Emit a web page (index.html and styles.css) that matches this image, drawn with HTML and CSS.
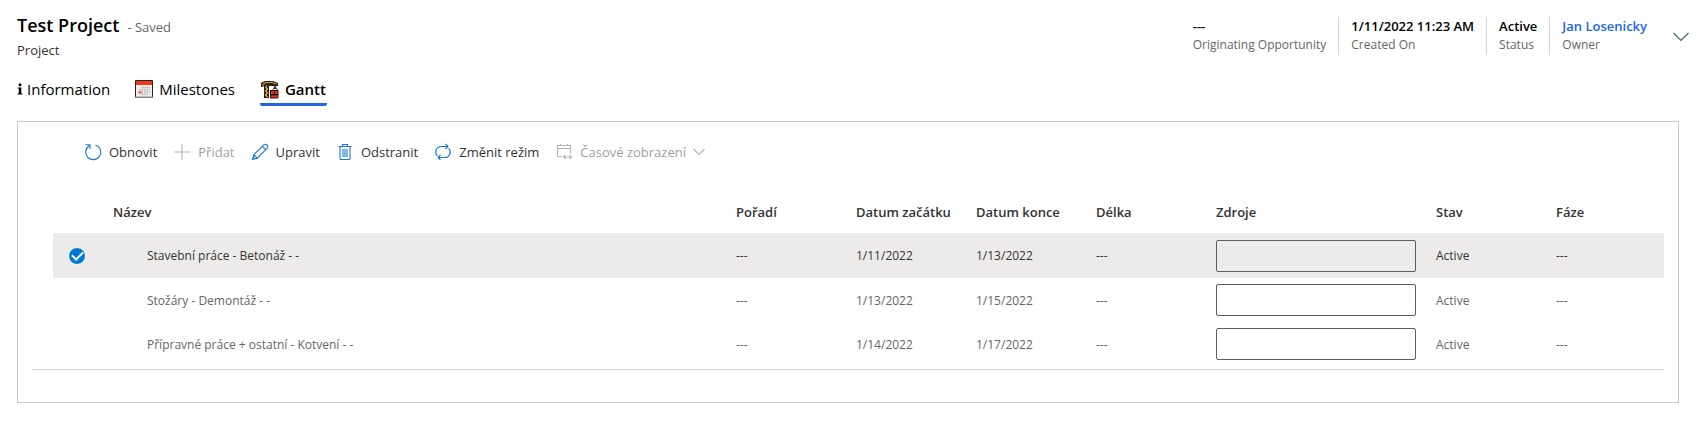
FILE: index.html
```html
<!DOCTYPE html>
<html lang="cs">
<head>
<meta charset="utf-8">
<meta name="viewport" content="width=device-width, initial-scale=1">
<title>Test Project</title>
<link rel="stylesheet" href="styles.css">
</head>
<body>
<header class="record-header">
  <div class="record-title">
    <div class="title-line"><h1>Test Project</h1><span class="saved">- Saved</span></div>
    <div class="entity">Project</div>
  </div>
  <dl class="summary">
    <div class="summary-item"><dt>Originating Opportunity</dt><dd>---</dd></div>
    <div class="summary-item"><dt>Created On</dt><dd>1/11/2022 11:23 AM</dd></div>
    <div class="summary-item"><dt>Status</dt><dd>Active</dd></div>
    <div class="summary-item"><dt>Owner</dt><dd><a href="#owner">Jan Losenicky</a></dd></div>
  </dl>
  <button class="expand" type="button" aria-label="Expand header">
    <svg width="16" height="10" viewBox="0 0 16 10"><path d="M.5 1 8 8.500 15.500 1" fill="none" stroke="#44646c" stroke-width="1.200"/></svg>
  </button>
</header>

<nav class="tabs">
  <a class="tab" href="#information">
    <svg width="6" height="12" viewBox="0 0 6 12"><circle cx="3" cy="1.700" r="1.500"/><path d="M.5 4.500H4.300V10.500H5.500V11.500H.5V10.500H1.800V5.500H.5Z"/></svg>
    Information</a>
  <a class="tab tab-milestones" href="#milestones">
    <svg width="18" height="18" viewBox="0 0 18 18"><path d="M.5.5h17v17H.5z" fill="#ededed" stroke="#222"/><path d="M1 1h16v4H1z" fill="#f03a17"/><path d="M0 16.500h18v1.500H0z" fill="#888"/><path d="M7 7.500h8M4 9.800h11M4 12.100h11M7 14.400h6" stroke="#a8a8a8" stroke-width="1.300" stroke-dasharray="1.500 1"/><path d="M3.500 11.500h3v2h-3z" fill="#f0573a"/></svg>
    Milestones</a>
  <a class="tab tab-gantt" href="#gantt" aria-current="page">
    <svg width="19" height="19" viewBox="0 0 19 19"><path d="M1 3 5 1h8l5 2v3h-2v3h-2V6H9v12H4V7H1z" fill="#27231d"/><path d="M2.500 4.500 6 2.500h6l4.500 1.500" fill="none" stroke="#d79d20" stroke-width="1.200"/><path d="M6.500 5v12M5 7l3 2-3 2 3 2-3 2 3 2" fill="none" stroke="#d7a62c" stroke-width="1"/><path d="M2 5h2v2H2z" fill="#777"/><path d="M12.500 10 15 6l2.500 4" fill="none" stroke="#555"/><path d="M10 10h8.500v8.500H10z" fill="#2b1715"/><path d="M11 11h3v3h-3zM15 11h2.500v3H15zM11 15.500h7v2h-7z" fill="#d8321f"/></svg>
    Gantt</a>
</nav>

<main class="panel">
  <div class="toolbar" role="toolbar">
    <button type="button">
      <svg width="18" height="18" viewBox="0 0 18 18"><path d="M5.200 2.800A7.500 7.500 0 1 0 11.500 2M1.500 1.700H6V6" /></svg>
      Obnovit</button>
    <button type="button" disabled>
      <svg width="18" height="18" viewBox="0 0 18 18"><path d="M9 1v16M1 9h16" /></svg>
      Přidat</button>
    <button type="button">
      <svg width="18" height="18" viewBox="0 0 18 18"><path d="M1.500 16.500 2.800 11.700 12.700 1.900Q14.300.6 16 2T16.100 5.300L6.300 15.200ZM11.300 3.300 14.700 6.700M2.800 11.700 6.300 15.200M2.200 14 4 15.800" /></svg>
      Upravit</button>
    <button type="button">
      <svg width="18" height="18" viewBox="0 0 18 18"><path d="M2.500 3.500h13M6.500 3.500v-2h5v2M4 3.500v12q0 1 1 1h8q1 0 1-1v-12M7 6v8M9 6v8M11 6v8" /></svg>
      Odstranit</button>
    <button type="button">
      <svg width="18" height="18" viewBox="0 0 18 18"><path d="M3.400 13Q.8 10 2.200 6.800 3.600 3.500 7 3.500H14M11.500 1 14 3.500 11.500 6M14.600 5Q17.200 8 15.800 11.200 14.400 14.500 11 14.500H4M6.500 12 4 14.500 6.500 17" /></svg>
      Změnit režim</button>
    <button type="button" disabled aria-haspopup="menu">
      <svg width="18" height="18" viewBox="0 0 18 18"><path d="M7 13.500H2.500v-11h13v8M2.500 5.500h13M5.500 1v2M12.500 1v2M8.500 14h8M10.500 12l-2 2 2 2M14.500 12l2 2-2 2" /></svg>
      Časové zobrazení
      <svg class="chevron" width="12" height="8" viewBox="0 0 12 8"><path d="M.5 1 6 6.500 11.500 1" /></svg>
    </button>
  </div>

  <div class="grid-wrap">
    <table class="grid">
      <colgroup><col class="c-check"><col><col class="c-std"><col class="c-std"><col class="c-std"><col class="c-std"><col class="c-res"><col class="c-std"><col class="c-last"></colgroup>
      <thead>
        <tr><td></td><th scope="col">Název</th><th scope="col">Pořadí</th><th scope="col">Datum začátku</th><th scope="col">Datum konce</th><th scope="col">Délka</th><th scope="col">Zdroje</th><th scope="col">Stav</th><th scope="col">Fáze</th></tr>
      </thead>
      <tbody>
        <tr class="selected"><td class="check"><input type="checkbox" aria-label="Stavební práce - Betonáž" checked></td><td class="name">Stavební práce - Betonáž - -</td><td>---</td><td>1/11/2022</td><td>1/13/2022</td><td>---</td><td><input class="resource" type="text" aria-label="Zdroje"></td><td>Active</td><td>---</td></tr>
        <tr><td class="check"><input type="checkbox" aria-label="Stožáry - Demontáž"></td><td class="name">Stožáry - Demontáž - -</td><td>---</td><td>1/13/2022</td><td>1/15/2022</td><td>---</td><td><input class="resource" type="text" aria-label="Zdroje"></td><td>Active</td><td>---</td></tr>
        <tr><td class="check"><input type="checkbox" aria-label="Přípravné práce + ostatní - Kotvení"></td><td class="name">Přípravné práce + ostatní - Kotvení - -</td><td>---</td><td>1/14/2022</td><td>1/17/2022</td><td>---</td><td><input class="resource" type="text" aria-label="Zdroje"></td><td>Active</td><td>---</td></tr>
      </tbody>
    </table>
  </div>
</main>
</body>
</html>
```
FILE: styles.css
```css
* { box-sizing: border-box; }

body {
  margin: 0;
  background: #fff;
  color: #000;
  font-family: "Open Sans", "Noto Sans", sans-serif;
  font-size: 13px;
}

h1, dl, dd { margin: 0; }
a { color: inherit; text-decoration: none; }
button { font: inherit; background: none; border: 0; padding: 0; }

.record-header {
  display: flex;
  align-items: flex-start;
  padding: 12px 17px 0;
}
.record-title { flex: 1; }
.title-line { display: flex; align-items: baseline; gap: 8px; line-height: 26px; }
h1 { font-size: 18px; font-weight: 600; }
.saved { color: #666; }
.entity { color: #333; font-weight: 500; line-height: 20px; }

.summary { display: flex; padding-top: 5px; }
.summary-item {
  display: flex;
  flex-direction: column-reverse;
  padding: 0 12px;
  border-left: 1px solid #d6d6d6;
}
.summary-item:first-child { border-left: 0; }
.summary dt { font-size: 12px; line-height: 20px; color: #666; }
.summary dd { font-weight: 600; line-height: 18px; }
.summary a { color: #2266e3; }
.expand { display: flex; margin: 20px 0 0 14px; }

.tabs { display: flex; gap: 25px; padding: 15px 17px 0; font-size: 15px; }
.tab {
  display: flex;
  align-items: center;
  gap: 4px;
  height: 31px;
  border-bottom: 3px solid transparent;
}
.tab-milestones, .tab-gantt { gap: 6px; }
.tab-gantt { padding-right: 1px; font-weight: 600; border-color: #2266e3; border-radius: 2px; }

.panel {
  margin: 15px 27px 0 17px;
  padding: 16px 14px 32px;
  border: 1px solid #c8c8c8;
}

.toolbar { display: flex; gap: 16px; padding-left: 52px; height: 28px; }
.toolbar button { display: flex; align-items: center; gap: 7px; color: #333; }
.toolbar svg { fill: none; stroke: #1976d8; stroke-width: 1.1; }
.toolbar button:disabled { color: #a19f9d; }
.toolbar button:disabled svg { stroke: #b5b3b1; }

.grid-wrap { padding: 24px 0 3px 21px; border-bottom: 1px solid #d6d6d6; }
.grid { width: 100%; table-layout: fixed; border-collapse: collapse; }
.grid th, .grid td { padding: 0; text-align: left; white-space: nowrap; }
.grid th { height: 43px; font-weight: 600; color: #333; }
.grid td { height: 44px; font-size: 12px; color: #666; }
.grid thead td { height: 43px; }
.grid .selected td { height: 45px; background: #ecebe9; color: #333; }
.grid .name { padding-left: 34px; font-weight: 500; }
.grid .check { padding-left: 15px; }
.c-check { width: 60px; }
.c-std { width: 120px; }
.c-res { width: 220px; }
.c-last { width: 108px; }

.check input {
  appearance: none;
  display: grid;
  place-items: center;
  width: 18px;
  height: 18px;
  margin: 0;
  border: 1px solid #fff;
  border-radius: 50%;
  background: #0078d4;
  opacity: 0;
}
.check input:checked { opacity: 1; }
.check input::after {
  content: "";
  width: 9px;
  height: 5px;
  margin-bottom: 3px;
  border: solid #fff;
  border-width: 0 0 2px 2px;
  transform: rotate(-45deg);
}

.resource {
  display: block;
  width: 200px;
  height: 32px;
  border: 1px solid #605e5c;
  border-radius: 2px;
  background: transparent;
}
```
